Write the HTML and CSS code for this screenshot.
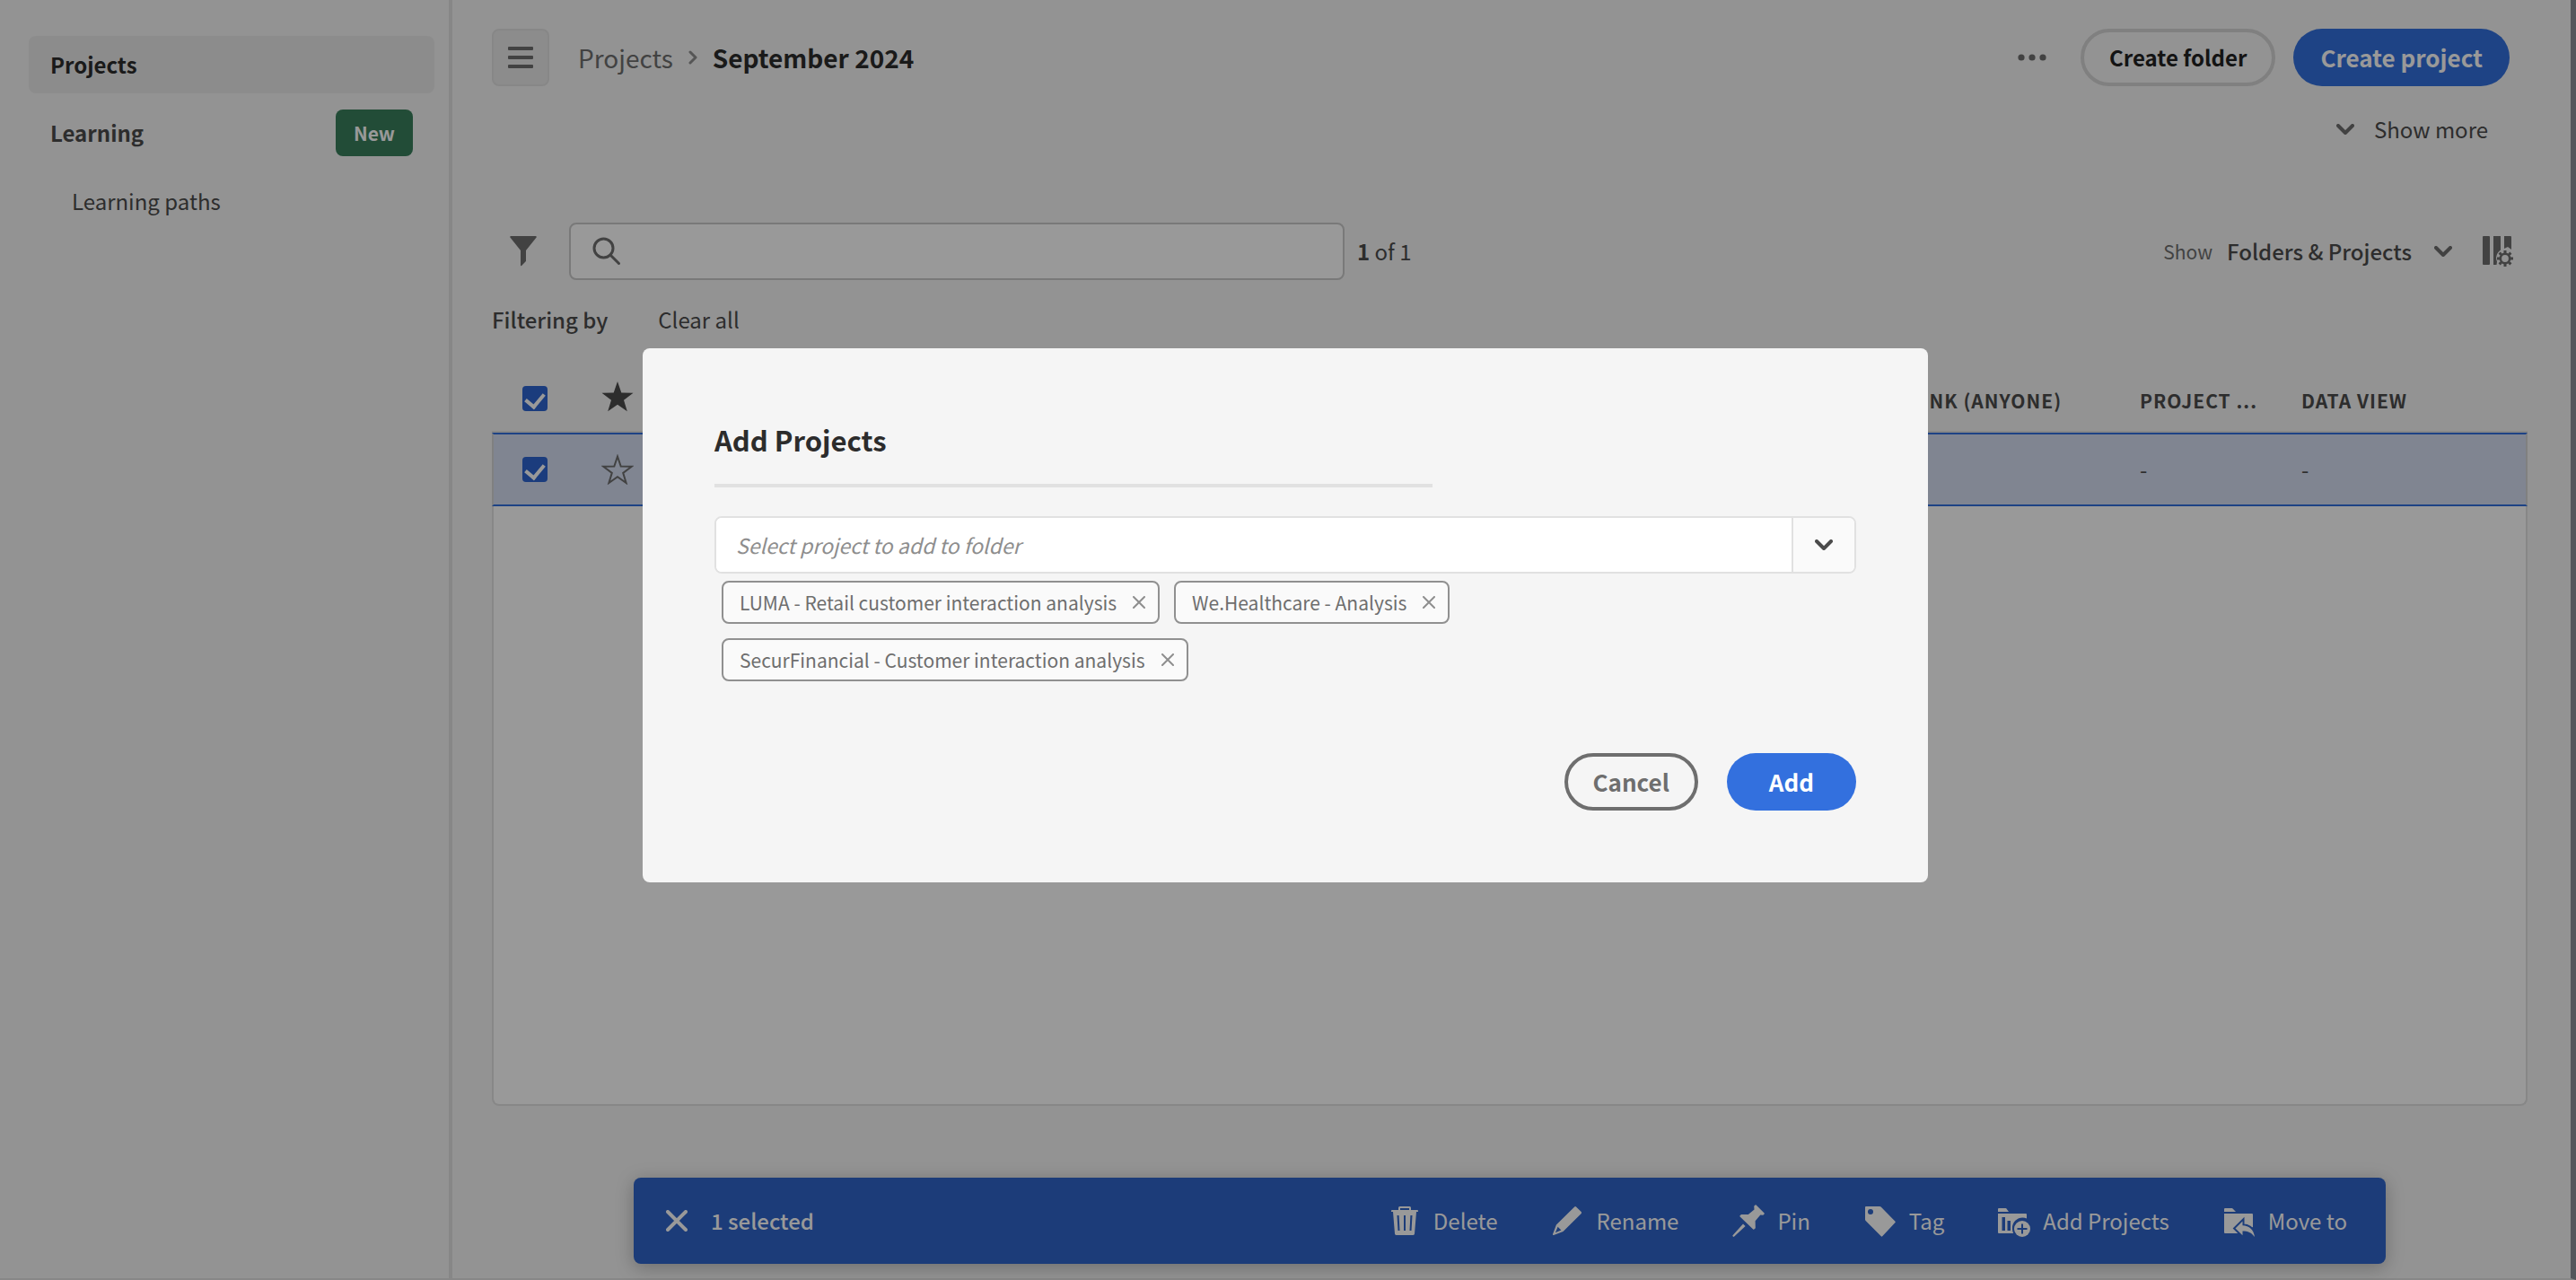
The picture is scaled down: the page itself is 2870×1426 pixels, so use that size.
FILE: index.html
```html
<!DOCTYPE html>
<html lang="en">
<head>
<meta charset="utf-8">
<title>Projects - September 2024</title>
<link rel="stylesheet" href="styles.css">
</head>
<body>
<div class="app">
  <nav class="sidebar" aria-label="Workspace">
    <a class="nav-item is-active" href="#projects">Projects</a>
    <a class="nav-item" href="#learning">Learning <span class="badge">New</span></a>
    <a class="nav-item nav-child" href="#paths">Learning paths</a>
  </nav>

  <main class="main">
    <header class="topbar">
      <button class="menu-button" type="button" aria-label="Toggle menu">
        <svg width="28" height="24" viewBox="0 0 28 24"><path fill="currentColor" d="M1 0h26a1 1 0 0 1 1 1v2a1 1 0 0 1-1 1H1a1 1 0 0 1-1-1V1a1 1 0 0 1 1-1zM1 10h26a1 1 0 0 1 1 1v2a1 1 0 0 1-1 1H1a1 1 0 0 1-1-1v-2a1 1 0 0 1 1-1zM1 20h26a1 1 0 0 1 1 1v2a1 1 0 0 1-1 1H1a1 1 0 0 1-1-1v-2a1 1 0 0 1 1-1z"/></svg>
      </button>
      <div class="breadcrumb">
        <a href="#projects">Projects</a>
        <svg width="10" height="16" viewBox="0 0 10 16"><path d="M2 2l6 6-6 6" fill="none" stroke="currentColor" stroke-width="3" stroke-linecap="round" stroke-linejoin="round"/></svg>
        <h1>September 2024</h1>
      </div>
      <button class="icon-button more" type="button" aria-label="More actions">
        <svg width="32" height="8" viewBox="0 0 32 8" fill="currentColor"><circle cx="4" cy="4" r="3.6"/><circle cx="16" cy="4" r="3.6"/><circle cx="28" cy="4" r="3.6"/></svg>
      </button>
      <button class="pill pill-outline" type="button">Create folder</button>
      <button class="pill pill-primary" type="button">Create project</button>
    </header>

    <div class="show-more-row">
      <button class="text-button show-more" type="button">
        <svg width="20" height="12" viewBox="0 0 20 12"><path d="M2 2l8 8 8-8" fill="none" stroke="currentColor" stroke-width="4" stroke-linecap="round" stroke-linejoin="round"/></svg>
        Show more
      </button>
    </div>

    <div class="toolbar">
      <button class="icon-button filter" type="button" aria-label="Filter">
        <svg width="30" height="34" viewBox="0 0 30 34"><path fill="currentColor" d="M1.200 0h27.600a1 1 0 0 1 .8 1.600L18 16v11.500a1 1 0 0 1-.3.700l-4.600 4.800a.7.700 0 0 1-1.100-.5V16L.4 1.600A1 1 0 0 1 1.200 0z"/></svg>
      </button>
      <label class="search">
        <svg width="32" height="32" viewBox="0 0 32 32" fill="none" stroke="currentColor" stroke-width="3" stroke-linecap="round"><circle cx="12.500" cy="12.500" r="10.500"/><path d="M20.500 20.500l9 9"/></svg>
        <input type="search" aria-label="Search projects">
      </label>
      <span class="count"><b>1</b> of 1</span>
      <label class="show-label" for="show">Show</label>
      <span class="picker">
        <select id="show"><option>Folders &amp; Projects</option><option>Folders</option><option>Projects</option></select>
        <svg width="20" height="12" viewBox="0 0 20 12"><path d="M2 2l8 8 8-8" fill="none" stroke="currentColor" stroke-width="4" stroke-linecap="round" stroke-linejoin="round"/></svg>
      </span>
      <button class="icon-button columns" type="button" aria-label="Column settings">
        <svg width="36" height="36" viewBox="0 0 36 36" fill="currentColor"><path d="M1 1h6a1 1 0 0 1 1 1v30a1 1 0 0 1-1 1H1a1 1 0 0 1-1-1V2a1 1 0 0 1 1-1zM12 1h8v15.500a12 12 0 0 0-5 8.500c0 1.500.4 3 1 4.500l-.5 3.500H12zM24 1h7a1 1 0 0 1 1 1v14l-4-3-4 2z"/><circle cx="25" cy="26" r="5.200" fill="none" stroke="currentColor" stroke-width="2.600"/><path fill="none" stroke="currentColor" stroke-width="3" d="M25 17v3M25 32v3M16 26h3M31 26h3M18.600 19.600l2.200 2.200M29.200 30.200l2.200 2.200M18.600 32.400l2.200-2.200M29.200 21.800l2.200-2.200"/></svg>
      </button>
    </div>

    <div class="filters">
      <span class="filters-title">Filtering by</span>
      <button class="text-button" type="button">Clear all</button>
    </div>

    <section class="list">
      <table class="projects">
        <colgroup><col class="col-check"><col class="col-star"><col><col class="col-link"><col class="col-project"><col class="col-view"></colgroup>
        <thead>
          <tr>
            <th><input class="check" type="checkbox" checked aria-label="Select all"></th>
            <th class="favorite"><svg class="star" width="36" height="34" viewBox="0 0 36 34" aria-label="Favorite"><path fill="currentColor" d="M18 0l4.300 12.400 13.200.3-10.500 8 3.800 12.600L18 25.800 7.200 33.300 11 20.700.5 12.700l13.200-.3z"/></svg></th>
            <th></th>
            <th class="label">Share link (anyone)</th>
            <th class="label">Project ...</th>
            <th class="label">Data view</th>
          </tr>
        </thead>
        <tbody>
          <tr>
            <td><input class="check" type="checkbox" checked aria-label="Select project"></td>
            <td><svg class="star star-empty" width="36" height="34" viewBox="0 0 36 34" aria-label="Not a favorite"><path fill="none" stroke="currentColor" stroke-width="2" d="M18 2.500l3.700 11 12 .3-9.500 7.100 3.400 11.100L18 25.300 8.400 32l3.400-11.100-9.500-7.100 12-.3z"/></svg></td>
            <td></td>
            <td></td>
            <td>-</td>
            <td>-</td>
          </tr>
        </tbody>
      </table>
      <div class="list-rest"></div>
    </section>

    <div class="action-bar">
      <button class="icon-button close" type="button" aria-label="Clear selection">
        <svg width="24" height="24" viewBox="0 0 24 24"><path d="M2 2l20 20M22 2L2 22" stroke="currentColor" stroke-width="4" stroke-linecap="round"/></svg>
      </button>
      <span class="selected">1 selected</span>
      <button class="action" type="button">
        <svg width="36" height="36" viewBox="0 0 36 36"><path fill="currentColor" fill-rule="evenodd" d="M11 6V3.500A1.500 1.500 0 0 1 12.500 2h11A1.500 1.500 0 0 1 25 3.500V6h7a1 1 0 0 1 1 1v.500a.5.500 0 0 1-.5.500H31l-2 24.600a1.500 1.500 0 0 1-1.500 1.400h-19A1.500 1.500 0 0 1 7 32.600L5 8H3.500a.5.500 0 0 1-.5-.5V7a1 1 0 0 1 1-1zM13 6h10V4H13zM9.500 12l1 17h2l-.9-17zM17 12v17h2V12zM24.400 12l-.9 17h2l1-17z"/></svg>
        Delete
      </button>
      <button class="action" type="button">
        <svg width="36" height="36" viewBox="0 0 36 36"><path fill="currentColor" fill-rule="evenodd" d="M26.200 2.400a1.300 1.300 0 0 1 1.800 0l5.700 5.700a1.300 1.300 0 0 1 0 1.800L13.500 30.100 3 34a.8.800 0 0 1-1-1L5.900 22.600zM7.600 24.800l-2.700 6.500 6.500-2.700z"/></svg>
        Rename
      </button>
      <button class="action" type="button">
        <svg width="36" height="36" viewBox="0 0 36 36"><path fill="currentColor" d="M25.500.4a.8.800 0 0 1 1.100 0l9 9a.8.800 0 0 1 0 1.100l-1.300 1.300-3-.3-5.700 6.700.2 8-1.500 1.300a.8.800 0 0 1-1.100 0L8.600 13.400a.8.800 0 0 1 0-1.100l1.400-1.400 7.800.1 6.700-5.600-.3-3.600zM12 21.500l2.600 2.600L2.200 35.500a1 1 0 0 1-1.500-1.400z"/></svg>
        Pin
      </button>
      <button class="action" type="button">
        <svg width="36" height="36" viewBox="0 0 36 36"><path fill="currentColor" fill-rule="evenodd" d="M2 2h15.200a2 2 0 0 1 1.400.6L34.500 18.700a1 1 0 0 1 0 1.400L20.200 35.300a1 1 0 0 1-1.400 0L1.600 18a2 2 0 0 1-.6-1.400V3a1 1 0 0 1 1-1zM7 5a3 3 0 1 0 0 6 3 3 0 0 0 0-6z"/></svg>
        Tag
      </button>
      <button class="action" type="button">
        <svg width="36" height="36" viewBox="0 0 36 36"><path fill="currentColor" fill-rule="evenodd" d="M1 4h7.500a1 1 0 0 1 .8.300L12 8H0V5a1 1 0 0 1 1-1zM0 10h31a1 1 0 0 1 1 1v4.500a11 11 0 0 0-4.500-1A11.500 11.500 0 0 0 16 26c0 2 .2 4 1.200 6H1a1 1 0 0 1-1-1zM4.500 14v15H8V14zM10.500 18v11H14V18z"/><circle cx="27" cy="27" r="9" fill="currentColor"/><path class="cut" d="M27 21.500v11M21.500 27h11" stroke-width="2"/></svg>
        Add Projects
      </button>
      <button class="action" type="button">
        <svg width="36" height="36" viewBox="0 0 36 36"><path fill="currentColor" d="M2 4h7.500a1 1 0 0 1 .8.300L14 8H1V5a1 1 0 0 1 1-1zM1 10h31a1 1 0 0 1 1 1v14l-16 7H2a1 1 0 0 1-1-1z"/><path class="cut" fill="currentColor" paint-order="stroke" stroke-width="4" d="M21.500 18.500v4.700C29 23.500 34 28 35 36c-3.500-5-7.500-6.600-13.500-6.600v4.900L13.500 26.500z"/></svg>
        Move to
      </button>
    </div>
  </main>
</div>

<div class="overlay">
  <div class="dialog" role="dialog" aria-modal="true" aria-labelledby="dialog-title">
    <h2 id="dialog-title">Add Projects</h2>
    <hr class="rule">
    <div class="combo">
      <input type="text" placeholder="Select project to add to folder" aria-label="Select project to add to folder">
      <button type="button" aria-label="Open project list">
        <svg width="20" height="12" viewBox="0 0 20 12"><path d="M2 2l8 8 8-8" fill="none" stroke="currentColor" stroke-width="4" stroke-linecap="round" stroke-linejoin="round"/></svg>
      </button>
    </div>
    <div class="chips">
      <span class="chip">LUMA - Retail customer interaction analysis
        <button type="button" aria-label="Remove LUMA"><svg width="14" height="14" viewBox="0 0 14 14"><path d="M1 1l12 12M13 1L1 13" stroke="currentColor" stroke-width="2" stroke-linecap="round"/></svg></button></span>
      <span class="chip">We.Healthcare - Analysis
        <button type="button" aria-label="Remove We.Healthcare"><svg width="14" height="14" viewBox="0 0 14 14"><path d="M1 1l12 12M13 1L1 13" stroke="currentColor" stroke-width="2" stroke-linecap="round"/></svg></button></span>
      <span class="chip">SecurFinancial - Customer interaction analysis
        <button type="button" aria-label="Remove SecurFinancial"><svg width="14" height="14" viewBox="0 0 14 14"><path d="M1 1l12 12M13 1L1 13" stroke="currentColor" stroke-width="2" stroke-linecap="round"/></svg></button></span>
    </div>
    <div class="dialog-actions">
      <button class="pill pill-cancel" type="button">Cancel</button>
      <button class="pill pill-primary pill-add" type="button">Add</button>
    </div>
  </div>
</div>
</body>
</html>
```
FILE: styles.css
```css
* { box-sizing: border-box; }

body {
  margin: 0;
  background: #f5f5f5;
  color: #4b4b4b;
  font: 24px/36px "Noto Sans CJK SC", "Noto Sans", sans-serif;
}

button, input, select { font: inherit; color: inherit; }
button { margin: 0; padding: 0; border: 0; background: none; cursor: pointer; white-space: nowrap; }
a { color: inherit; text-decoration: none; }
svg { display: block; flex: none; }
h1, h2 { margin: 0; }

.app {
  display: flex;
  min-height: 100vh;
  border-right: 6px solid #8d8f99;
  border-bottom: 2px solid #e1e1e1;
}

/* Sidebar */
.sidebar {
  flex: none;
  display: flex;
  flex-direction: column;
  gap: 12px;
  width: 504px;
  padding: 40px 16px 0 32px;
  border-right: 4px solid #e1e1e1;
}
.nav-item {
  display: flex;
  align-items: center;
  justify-content: space-between;
  height: 64px;
  padding: 0 24px;
  border-radius: 8px;
  font-weight: 700;
}
.nav-item.is-active { background: #eaeaea; color: #2c2c2c; }
.nav-child { padding-left: 48px; font-weight: 400; }
.badge {
  padding: 8px 20px;
  border-radius: 8px;
  background: #397f5c;
  color: #fff;
  font-size: 21px;
}

/* Main column */
.main {
  flex: 1;
  min-width: 0;
  display: flex;
  flex-direction: column;
  padding: 32px 48px 16px 44px;
}
.topbar { display: flex; align-items: center; padding-right: 20px; }
.menu-button {
  display: grid;
  place-items: center;
  width: 64px;
  height: 64px;
  border: 2px solid #e1e1e1;
  border-radius: 8px;
  background: #eaeaea;
  color: #6e6e6e;
}
.breadcrumb {
  flex: 1;
  display: flex;
  align-items: center;
  gap: 17px;
  padding-left: 32px;
  font-size: 28px;
  color: #6e6e6e;
}
.breadcrumb svg { color: #909090; }
.breadcrumb h1 { color: #2c2c2c; font-size: 28px; font-weight: 700; }
.icon-button { color: #6e6e6e; }
.more { margin-right: 38px; }
.pill {
  height: 64px;
  padding: 0 30px;
  border-radius: 32px;
  font-size: 26px;
  font-weight: 700;
}
.pill-outline { padding: 0 28px; border: 4px solid #d5d5d5; color: #222; font-size: 24px; }
.pill-primary { margin-left: 20px; background: #3370de; color: #fff; }

.show-more-row { display: flex; justify-content: flex-end; padding: 30px 44px 0 0; }
.text-button { display: flex; align-items: center; gap: 22px; }
.show-more svg, .picker svg { color: #6e6e6e; }

.toolbar { display: flex; align-items: center; height: 64px; margin-top: 86px; padding-right: 14px; }
.filter { width: 86px; padding-left: 20px; }
.search {
  flex: 0 1 864px;
  display: flex;
  align-items: center;
  gap: 16px;
  height: 64px;
  padding: 0 24px;
  border: 2px solid #cacaca;
  border-radius: 8px;
  background: #fff;
  color: #6e6e6e;
}
.search input { flex: 1; min-width: 0; border: 0; outline: 0; background: none; appearance: none; }
.count { margin: 0 auto 0 14px; }
.show-label { margin-right: 16px; color: #6e6e6e; font-size: 21px; }
.picker { display: flex; align-items: center; gap: 24px; margin-right: 34px; }
.picker select { padding: 0; border: 0; background: none; appearance: none; font-weight: 500; }

.filters { display: flex; gap: 56px; padding: 26px 0; }
.filters-title { font-weight: 500; }

/* Project list */
.list { flex: 1; display: flex; flex-direction: column; }
.projects { width: 100%; table-layout: fixed; border-spacing: 0; text-align: left; }
.col-check { width: 96px; }
.col-star { width: 88px; }
.col-link { width: 336px; }
.col-project { width: 180px; }
.col-view { width: 252px; }
.projects th, .projects td { padding: 0; white-space: nowrap; }
.projects th {
  height: 82px;
  padding-top: 8px;
  border-bottom: 2px solid #e1e1e1;
  font-size: 21px;
  letter-spacing: 1px;
  text-transform: uppercase;
}
.projects .favorite { padding-top: 4px; }
.projects .label { padding-top: 12px; }
.projects td {
  height: 82px;
  border: solid #3370de;
  border-width: 2px 0;
  background: #d5def2;
}
.projects td:first-child { border-left: 2px solid #d5d5d5; }
.projects td:last-child { border-right: 2px solid #d5d5d5; }
.star { margin: 0 auto; color: #4b4b4b; }
.star-empty { color: #6e6e6e; }
.projects tr > :first-child { padding-left: 34px; }
.projects td:first-child { padding-left: 32px; }
.check {
  display: block;
  appearance: none;
  width: 28px;
  height: 28px;
  margin: 0;
  border-radius: 4px;
  background: #2d64d0;
}
.check::after {
  content: "";
  display: block;
  width: 10px;
  height: 16px;
  margin: 0 auto;
  border: solid #fff;
  border-width: 0 4px 4px 0;
  transform: translateY(4px) rotate(40deg);
}
.list-rest {
  flex: 1;
  border: 2px solid #e1e1e1;
  border-top: 0;
  border-radius: 0 0 8px 8px;
  background: #fff;
}

/* Bulk actions */
.action-bar {
  display: flex;
  align-items: center;
  gap: 60px;
  height: 96px;
  margin: 80px 158px 0;
  padding: 0 43px 0 36px;
  border-radius: 8px;
  background: #2f64ca;
  box-shadow: 0 4px 20px rgba(0, 0, 0, .25);
  color: #fff;
}
.close { margin-right: -34px; color: #fff; }
.selected { margin-right: auto; font-weight: 500; }
.action { display: flex; align-items: center; gap: 14px; }
.cut { stroke: #2f64ca; }

/* Dialog */
.overlay {
  position: fixed;
  inset: 0;
  padding: 388px 6px 0 0;
  background: rgba(0, 0, 0, .4);
}
.dialog {
  width: 50%;
  margin: 0 auto;
  padding: 80px;
  border-radius: 8px;
  background: #f5f5f5;
}
.dialog h2 { color: #2c2c2c; font-size: 31px; line-height: 44px; font-weight: 700; }
.rule { width: 800px; max-width: 100%; height: 4px; margin: 27px 0 32px; border: 0; background: #e1e1e1; }
.combo {
  display: flex;
  height: 64px;
  border: 2px solid #e1e1e1;
  border-radius: 8px;
  background: #fff;
  overflow: hidden;
}
.combo input { flex: 1; min-width: 0; padding: 0 22px; border: 0; outline: 0; font-size: 23px; }
.combo input::placeholder { color: #8e8e8e; font-style: italic; opacity: 1; }
.combo button {
  display: grid;
  place-items: center;
  width: 70px;
  border-left: 2px solid #e1e1e1;
  background: #fafafa;
}
.chips { display: flex; flex-wrap: wrap; gap: 16px; width: 860px; max-width: 100%; padding: 8px 8px 0; }
.chip {
  display: flex;
  align-items: center;
  gap: 18px;
  height: 48px;
  padding: 0 14px 0 18px;
  border: 2px solid #909090;
  border-radius: 8px;
  background: #fafafa;
  color: #6e6e6e;
  font-size: 21px;
}
.chip button { color: #8e8e8e; }
.dialog-actions { display: flex; justify-content: flex-end; gap: 12px; margin-top: 80px; }
.pill-cancel { padding: 0 28px; border: 4px solid #6e6e6e; color: #6e6e6e; }
.pill-add { padding: 0 47px; }
```
